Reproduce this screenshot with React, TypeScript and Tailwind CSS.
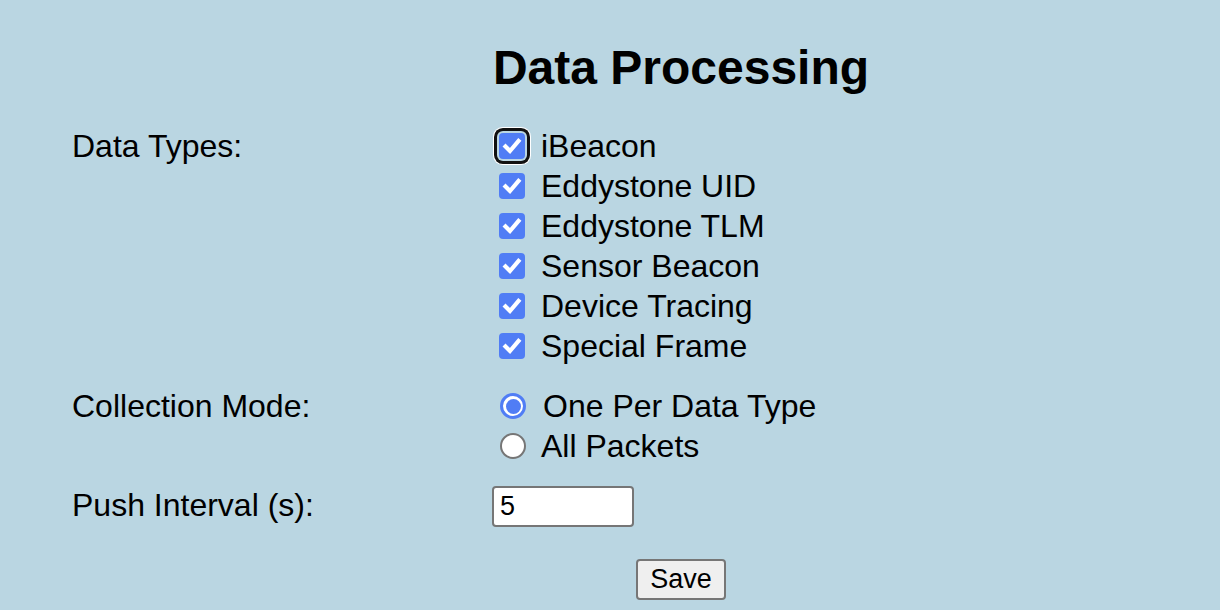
import React from 'react';

const dataTypes = ['iBeacon', 'Eddystone UID', 'Eddystone TLM', 'Sensor Beacon', 'Device Tracing', 'Special Frame'];

function CheckBox({ focused }: { focused?: boolean }) {
  return (
    <span
      className={
        'ml-[7px] mr-[16px] flex h-[26px] w-[26px] items-center justify-center rounded-[4px] bg-[#507df5] ' +
        (focused ? 'shadow-[0_0_0_2px_#bad6e2,0_0_0_5px_#111111,0_0_0_6px_#ffffff]' : '')
      }
    >
      <svg width="26" height="26" viewBox="0 0 26 26" fill="none">
        <path d="M6.5 13.5 L11 18 L19.5 8" stroke="white" strokeWidth="4.2" strokeLinecap="square" strokeLinejoin="miter" />
      </svg>
    </span>
  );
}

function Radio({ checked }: { checked?: boolean }) {
  if (checked) {
    return (
      <span className="ml-[8px] mr-[17px] flex h-[26px] w-[26px] items-center justify-center rounded-full border-[3px] border-[#507df5] bg-white">
        <span className="h-[15px] w-[15px] rounded-full bg-[#507df5]" />
      </span>
    );
  }
  return <span className="ml-[8px] mr-[15px] h-[26px] w-[26px] rounded-full border-2 border-[#767676] bg-white" />;
}

export default function App() {
  return (
    <div className="min-h-[610px] w-full overflow-hidden bg-[#bad6e2] pt-[41px] text-black [font-family:'Liberation_Sans',Arial,sans-serif]">
      <div className="pl-[142px] text-center">
        <h2 className="text-[48px] leading-[54px] font-bold">Data Processing</h2>
      </div>

      <div className="mt-[31px] grid grid-cols-[420px_1fr] gap-y-[20px] pl-[72px] text-[32px] leading-[40px]">
        <div>Data Types:</div>
        <div className="flex flex-col">
          {dataTypes.map((t, i) => (
            <label key={t} className="flex h-[40px] items-center">
              <CheckBox focused={i === 0} />
              <span>{t}</span>
            </label>
          ))}
        </div>

        <div>Collection Mode:</div>
        <div className="flex flex-col">
          <label className="flex h-[40px] items-center">
            <Radio checked />
            <span>One Per Data Type</span>
          </label>
          <label className="flex h-[40px] items-center">
            <Radio />
            <span>All Packets</span>
          </label>
        </div>

        <div className="-mt-[1px]">Push Interval (s):</div>
        <div className="flex items-center">
          <div className="flex h-[41px] w-[142px] items-center rounded-[4px] border-2 border-[#767676] bg-white px-[6px] text-[27px] leading-none">
            5
          </div>
        </div>
      </div>

      <div className="mt-[32px] flex justify-center pl-[142px]">
        <button className="flex h-[41px] w-[90px] items-center justify-center rounded-[4px] border-2 border-[#767676] bg-[#efefef] text-[27px] leading-none">
          Save
        </button>
      </div>
    </div>
  );
}
